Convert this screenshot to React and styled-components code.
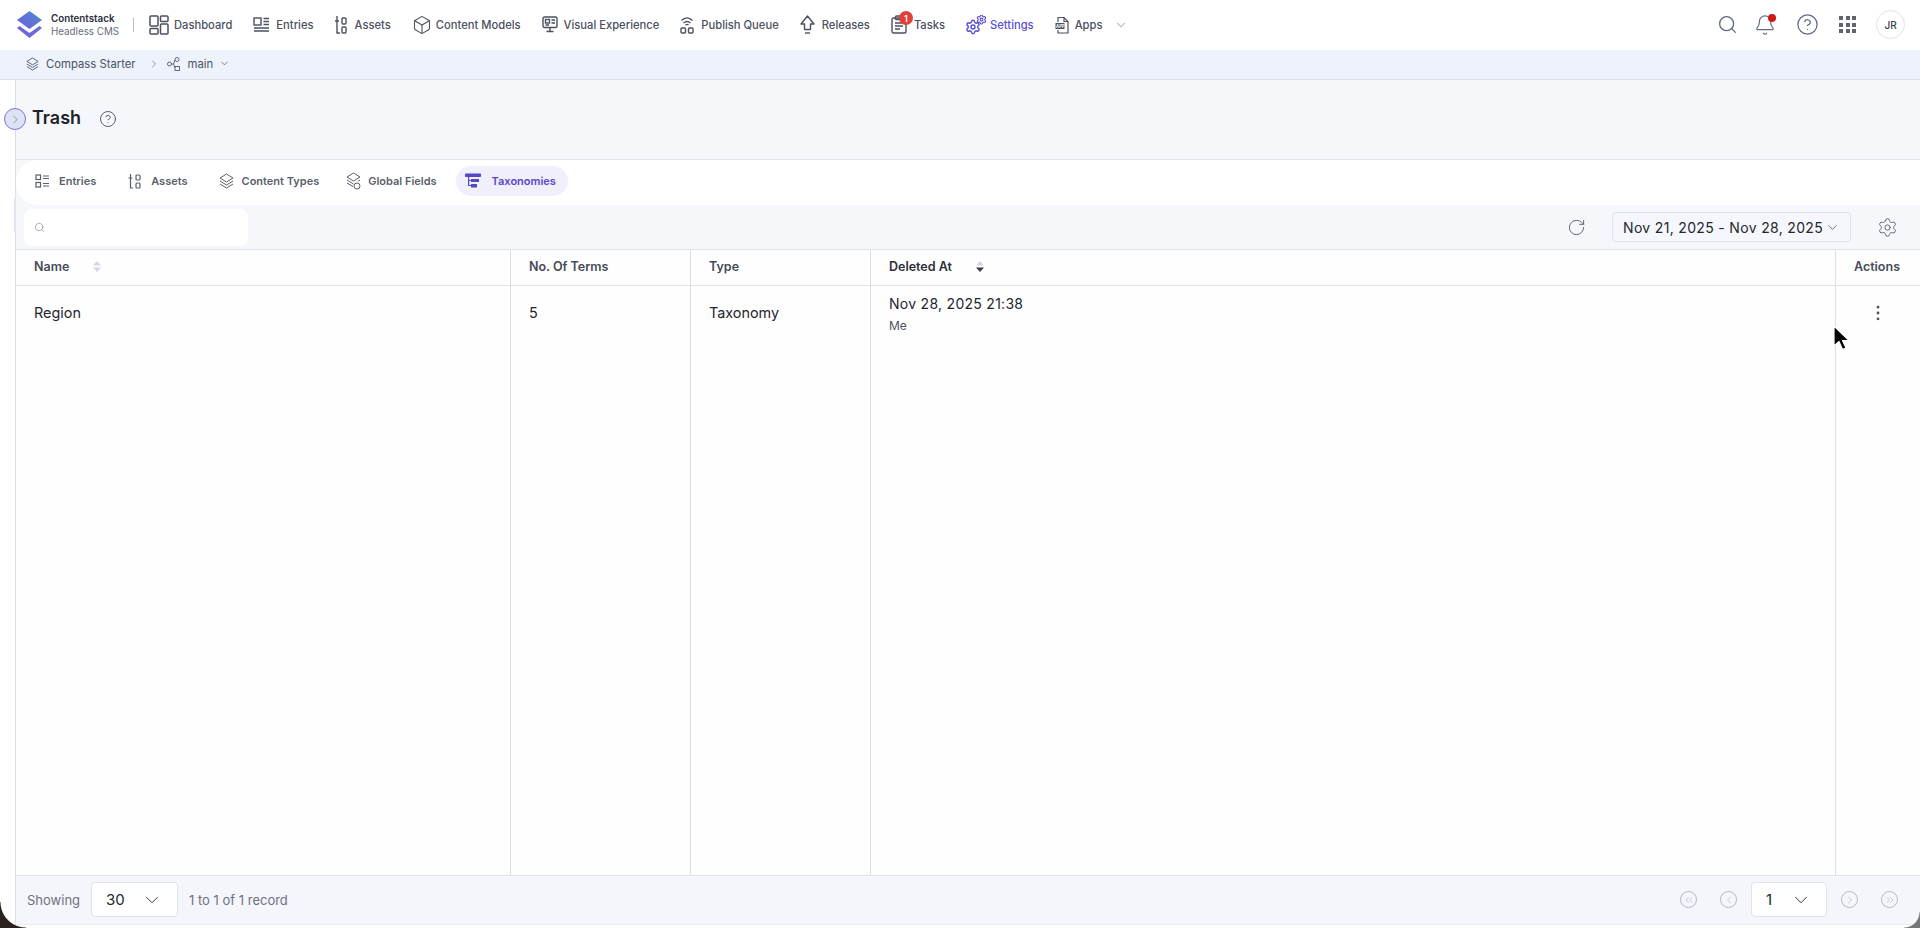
import React from "react";
import styled, { createGlobalStyle } from "styled-components";
import { ChevronDown, ChevronRight, ChevronLeft, ChevronsLeft, ChevronsRight, RotateCw, Settings, Box, Search, Bell, CircleHelp, MoreVertical } from "lucide-react";

const Global = createGlobalStyle`
  html, body { margin: 0; padding: 0; height: 100%; background: #fff; }
  #root { height: 100%; }
  * { box-sizing: border-box; }
  body { font-family: Inter, "Liberation Sans", sans-serif; color: #23262e; overflow: hidden; }
`;

const Page = styled.div`
  position: relative;
  height: 928px;
  width: 1920px;
  display: flex;
  flex-direction: column;
  overflow: hidden;
  background: #fff;
`;

const TopBar = styled.header`
  height: 50px;
  flex: none;
  display: flex;
  align-items: center;
  padding: 0 15px 1px 17px;
  background: #fff;
`;
const Brand = styled.div`
  display: flex;
  align-items: center;
  gap: 9px;
  width: 116px;
`;
const BrandText = styled.div`
  display: flex;
  flex-direction: column;
  gap: 2px;
  white-space: nowrap;
  line-height: 11px;
`;
const BrandName = styled.span`
  font-size: 9.8px;
  font-weight: 600;
  color: #2b2f3a;
`;
const BrandSub = styled.span`
  font-size: 9.8px;
  color: #666d7c;
`;
const Divider = styled.span`
  width: 1px;
  height: 14px;
  background: #b9bdc7;
  margin-right: 15px;
`;
const Nav = styled.nav`
  display: flex;
  align-items: center;
  gap: 21px;
`;
const NavItem = styled.a`
  position: relative;
  display: flex;
  align-items: center;
  gap: ${(p) => p.$gap}px;
  font-size: 11.2px;
  font-weight: 500;
  white-space: nowrap;
  color: ${(p) => (p.$active ? "#5c50d6" : "#4a5160")};
`;
const Badge = styled.span`
  position: absolute;
  left: 8px;
  top: -4px;
  width: 14px;
  height: 14px;
  border-radius: 50%;
  background: #e2403a;
  color: #fff;
  font-size: 9px;
  font-weight: 600;
  display: flex;
  align-items: center;
  justify-content: center;
`;
const Tools = styled.div`
  margin-left: auto;
  display: flex;
  align-items: center;
  gap: 20px;
  color: #5d6b85;
`;
const ToolIcon = styled.span`
  position: relative;
  display: flex;
  margin-right: ${(p) => p.$mr || 0}px;
`;
const Dot = styled.span`
  position: absolute;
  right: 0;
  top: 0;
  width: 8px;
  height: 8px;
  border-radius: 50%;
  background: #cf1b12;
`;
const Dots = styled.span`
  display: grid;
  grid-template-columns: repeat(3, 4px);
  gap: 2.5px;
`;
const Square = styled.i`
  display: block;
  width: 4px;
  height: 4px;
  background: #5f6470;
`;
const Avatar = styled.span`
  width: 29px;
  height: 29px;
  border-radius: 50%;
  border: 1px solid #dfe2ec;
  display: flex;
  align-items: center;
  justify-content: center;
  font-size: 10px;
  font-weight: 500;
  color: #3c404b;
`;

const CrumbBar = styled.div`
  height: 30px;
  flex: none;
  display: flex;
  align-items: center;
  padding: 0 0 2px 26px;
  background: #edf2fb;
  border-bottom: 1px solid #dcdfea;
  font-size: 11.3px;
  font-weight: 400;
  color: #4b5262;
`;
const CrumbText = styled.span`
  margin-left: ${(p) => p.$ml}px;
  white-space: nowrap;
`;
const CrumbIcon = styled.span`
  margin-left: ${(p) => p.$ml}px;
  display: flex;
  color: #555b6b;
`;

const Body = styled.div`
  flex: 1;
  display: flex;
  min-height: 0;
`;
const Rail = styled.aside`
  width: 15px;
  flex: none;
  background: #fff;
`;
const Main = styled.main`
  flex: 1;
  min-width: 0;
  display: flex;
  flex-direction: column;
  border-left: 1px solid #dcdfe9;
  background: #fff;
`;
const PageHead = styled.div`
  height: 80px;
  flex: none;
  display: flex;
  align-items: flex-start;
  padding: 27px 0 0 16px;
  gap: 18px;
  background: #f6f7fb;
  border-bottom: 1px solid #e1e4ee;
`;
const Title = styled.h1`
  margin: 0;
  font-size: 18px;
  line-height: 22px;
  font-weight: 600;
  color: #1f222a;
`;
const HelpWrap = styled.span`
  display: flex;
  color: #4b505c;
  margin-top: 3px;
`;
const TabStrip = styled.div`
  height: 45px;
  flex: none;
  background: #f6f7fb;
`;
const Tabs = styled.div`
  height: 100%;
  display: flex;
  align-items: center;
  padding: 0 0 3px 19px;
  background: #fff;
  border-radius: 22px 0 0 22px;
`;
const Tab = styled.a`
  display: flex;
  align-items: center;
  gap: ${(p) => p.$gap}px;
  height: 30px;
  margin-right: ${(p) => p.$mr}px;
  padding: 0 ${(p) => (p.$active ? "12px" : "0")} 0 ${(p) => (p.$active ? "9px" : "0")};
  border-radius: 15px;
  font-size: 11px;
  font-weight: 600;
  white-space: nowrap;
  color: ${(p) => (p.$active ? "#5548c8" : "#5b5f6b")};
  background: ${(p) => (p.$active ? "#f0effb" : "transparent")};
`;
const Toolbar = styled.div`
  height: 44px;
  flex: none;
  display: flex;
  align-items: center;
  padding: 0 22px 0 8px;
  background: #f6f7fb;
`;
const SearchBox = styled.div`
  width: 224px;
  height: 37px;
  margin-top: 1px;
  padding-left: 10px;
  display: flex;
  align-items: center;
  background: #fff;
  border-radius: 8px;
  color: #8b93a3;
`;
const ToolbarRight = styled.div`
  margin-left: auto;
  display: flex;
  align-items: center;
  color: #5a5f6b;
`;
const DatePicker = styled.div`
  width: 239px;
  height: 30px;
  margin: 0 26px 0 26px;
  padding-left: 10px;
  display: flex;
  align-items: center;
  gap: 2px;
  border: 1px solid #dde3f0;
  border-radius: 4px;
  background: #f6f7fc;
  font-size: 14px;
  letter-spacing: 0.33px;
  white-space: nowrap;
  color: #23262e;
`;
const Table = styled.div`
  flex: 1;
  min-height: 0;
  display: grid;
  grid-template-columns: 495px 180px 180px 965px 1fr;
  grid-template-rows: 36px 1fr;
  border-top: 1px solid #dfe2ec;
  background: #fefefe;
`;
const HeadCell = styled.div`
  display: flex;
  align-items: center;
  gap: ${(p) => p.$gap || 0}px;
  padding-left: 18px;
  padding-bottom: 3px;
  font-size: 12.5px;
  font-weight: 600;
  color: ${(p) => (p.$dark ? "#2c2f38" : "#464b57")};
  border-right: ${(p) => (p.$last ? "none" : "1px solid #d9dceb")};
  border-bottom: 1px solid #dfe2ec;
`;
const ActionsHead = styled(HeadCell)`
  padding-left: 18px;
`;
const Cell = styled.div`
  padding: 10px 18px 0;
  font-size: 14.4px;
  line-height: 34px;
  color: #23262e;
  border-right: ${(p) => (p.$last ? "none" : "1px solid #d9dceb")};
`;
const DateCell = styled(Cell)`
  padding-top: 8px;
`;
const DateLine = styled.div`
  font-size: 14px;
  line-height: 20px;
  letter-spacing: 0.28px;
`;
const ByLine = styled.div`
  font-size: 12px;
  line-height: 16px;
  margin-top: 4px;
  color: #4e5360;
`;
const ActionCell = styled(Cell)`
  padding: 17px 0 0 32px;
  color: #4a4d57;
  line-height: 0;
`;
const Footer = styled.footer`
  height: 50px;
  flex: none;
  margin-bottom: 3px;
  display: flex;
  align-items: center;
  padding: 0 0 1px 11px;
  background: #f5f5fc;
  border-top: 1px solid #dfe2ec;
  border-bottom: 1px solid #ebedf5;
  font-size: 13px;
  color: #6d7280;
`;
const Select = styled.div`
  width: ${(p) => p.$w}px;
  height: 35px;
  display: flex;
  align-items: center;
  justify-content: space-between;
  padding: 0 ${(p) => p.$pr}px 0 ${(p) => p.$pl}px;
  margin: ${(p) => p.$m};
  background: #fff;
  border: 1px solid #dde3f0;
  border-radius: 4px;
  font-size: 15px;
  color: #23262e;
`;
const Pager = styled.div`
  margin-left: auto;
  display: flex;
  align-items: center;
  padding-right: 22px;
`;
const PageDot = styled.span`
  width: 17px;
  height: 17px;
  margin: ${(p) => p.$m};
  border-radius: 50%;
  border: 1px solid #b5b7c0;
  display: flex;
  align-items: center;
  justify-content: center;
  color: #9a9da8;
`;

const CollapseBtn = styled.button`
  position: absolute;
  left: 4px;
  top: 108px;
  width: 22px;
  height: 22px;
  padding: 0;
  border-radius: 50%;
  border: 1px solid #7a76d8;
  background: #dfe2f5;
  color: #666a78;
  display: flex;
  align-items: center;
  justify-content: center;
`;
const Handle = styled.span`
  position: absolute;
  left: 14px;
  top: 198px;
  width: 2px;
  height: 34px;
  background: #dfe3f3;
`;
const Pointer = styled.svg`
  position: absolute;
  left: 1832px;
  top: 324px;
`;
const CornerLeft = styled.span`
  position: absolute;
  left: 0;
  bottom: 0;
  width: 26px;
  height: 26px;
  background: radial-gradient(circle at 100% 0, transparent 25px, #2a211e 26px);
`;
const CornerRight = styled.span`
  position: absolute;
  right: 0;
  bottom: 0;
  width: 16px;
  height: 16px;
  background: radial-gradient(circle at 0 0, transparent 15px, #77777a 16px);
`;

const S = ({ w, h, vb, children, sw = 1.4 }) => (
  <svg width={w} height={h} viewBox={vb || `0 0 ${w} ${h}`} fill="none" stroke="currentColor" strokeWidth={sw} style={{ flex: "none", display: "block" }}>
    {children}
  </svg>
);

const Logo = () => (
  <svg width="25" height="27" viewBox="0 0 25 27" style={{ flex: "none" }}>
    <defs>
      <linearGradient id="lg" x1="0" y1="1" x2="1" y2="0">
        <stop offset="0" stopColor="#6d5ce0" />
        <stop offset="1" stopColor="#4f8fc9" />
      </linearGradient>
    </defs>
    <polygon points="12.5,0 25,9 12.5,18 0,9" fill="url(#lg)" />
    <polygon points="0,17 2.5,15 12.5,22 22.5,15 25,17 12.5,27" fill="#6e68e0" />
  </svg>
);

const IcDash = () => (
  <S w={20} h={20} sw={1.5}>
    <rect x="1" y="1" width="8" height="10" rx="1" />
    <rect x="1" y="13.5" width="8" height="5.5" rx="1" />
    <rect x="11.5" y="1" width="7.5" height="5.5" rx="1" />
    <rect x="11.5" y="9" width="7.5" height="10" rx="1" />
  </S>
);
const IcEntries = () => (
  <S w={17} h={17}>
    <rect x="1" y="2" width="7" height="7" />
    <path d="M10.5 2.5H16M10.5 5.5H16M10.5 8.5H16M1 12H16M1 15H16" />
  </S>
);
const IcAssets = () => (
  <S w={12} h={20}>
    <path d="M2 1V18H5M0 6H4" />
    <rect x="7" y="3" width="4" height="6" rx="1" />
    <rect x="7" y="12" width="4" height="6" rx="1" />
  </S>
);
const IcVisual = () => (
  <S w={16} h={17}>
    <rect x="1" y="1" width="14" height="10.5" rx="1.5" />
    <rect x="3.5" y="3.5" width="4" height="3.5" />
    <path d="M9.5 4H13M9.5 7H13M3.5 9H7M8 11.5V15M4.5 15.5H11.5" />
  </S>
);
const IcPublish = () => (
  <S w={14} h={18}>
    <path d="M1.5 4.5C5 1 9 1 12.5 4.5M3.5 7C6 4.8 8 4.8 10.5 7M5.5 9C6.5 8.2 7.5 8.2 8.5 9" />
    <rect x="1" y="12" width="4.5" height="5" rx="1" />
    <rect x="8.5" y="12" width="4.5" height="5" rx="1" />
  </S>
);
const IcRelease = () => (
  <S w={15} h={19}>
    <path d="M7.5 1L14 9H10.5V14.5H4.5V9H1Z" strokeLinejoin="round" />
    <path d="M5 18H10" />
  </S>
);
const IcTasks = () => (
  <S w={16} h={19}>
    <rect x="1" y="3" width="14" height="15" rx="1.5" />
    <rect x="4.5" y="1" width="7" height="3.5" rx="1" />
    <path d="M4 8H12M4 11H12M4 14H9" />
  </S>
);
const IcSettings = () => (
  <svg width="20" height="20" viewBox="0 0 20 20" fill="none" style={{ flex: "none" }}>
    <Settings x="-1" y="4" width="16" height="16" strokeWidth={2.2} color="#5c50d6" />
    <Settings x="10" y="-1" width="11" height="11" strokeWidth={2.4} color="#5c50d6" />
  </svg>
);
const IcApps = () => (
  <S w={14} h={18} sw={1.2}>
    <path d="M3 6V1.5H9L13 5.5V17H3V14" />
    <path d="M9 1.5V5.5H13" />
    <rect x="0.5" y="7" width="9" height="6" fill="#4a5160" stroke="none" />
    <text x="1" y="11.7" fontSize="4.2" fontWeight="700" fill="#fff" stroke="none" fontFamily="Inter, sans-serif">APP</text>
  </S>
);
const IcStack = ({ s = 15 }) => (
  <S w={s} h={s + 1} vb="0 0 15 16" sw={1}>
    <path d="M7.5 1L14 5L7.5 9L1 5Z" />
    <path d="M1 8L7.5 12L14 8M1 11L7.5 15L14 11" />
  </S>
);
const IcBranch = () => (
  <S w={14} h={14} sw={0.9}>
    <circle cx="2.5" cy="7" r="2" />
    <rect x="8" y="0.5" width="4" height="4" rx="2" />
    <rect x="8" y="9.5" width="4.5" height="4" />
    <path d="M4.5 7H6.5L8 3M6.5 7L8 11" />
  </S>
);
const IcTabEntries = () => (
  <S w={15} h={14} sw={1.2}>
    <rect x="1" y="1" width="4.5" height="4.5" />
    <rect x="1" y="8.5" width="4.5" height="4.5" />
    <path d="M8 2H14M8 4.5H14M8 9.5H14M8 12H14" />
  </S>
);
const IcTabAssets = () => (
  <S w={13} h={16} sw={1.2}>
    <path d="M2.5 1V15H5M0.5 5H4.5" />
    <rect x="8" y="2" width="4" height="5" rx="1" />
    <rect x="8" y="10" width="4" height="5" rx="1" />
  </S>
);
const IcGlobal = () => (
  <S w={15} h={18} vb="0 0 15 18" sw={1}>
    <path d="M7.5 1L14 5L7.5 9L1 5Z" />
    <path d="M1 8L7.5 12M14 8L12 9.2M1 11L7 14.5" />
    <circle cx="11" cy="14" r="3" />
  </S>
);
const IcTaxonomy = () => (
  <svg width="16" height="16" viewBox="0 0 16 16" fill="#5548c8" style={{ flex: "none" }}>
    <rect x="0" y="0.5" width="16" height="3.5" rx="0.7" />
    <rect x="3" y="4" width="1.2" height="9" />
    <rect x="6" y="6" width="8" height="3" />
    <rect x="6" y="11" width="6" height="3.5" />
    <rect x="3" y="7" width="3" height="1" />
    <rect x="3" y="12" width="3" height="1" />
  </svg>
);
const Sort = ({ active }) => (
  <svg width="8" height="11" viewBox="0 0 8 11" style={{ flex: "none" }}>
    <polygon points="4,0 8,4.5 0,4.5" fill="#d4d7e3" />
    <polygon points="0,6.5 8,6.5 4,11" fill={active ? "#3a3d46" : "#d4d7e3"} />
  </svg>
);

const navItems = [
  { label: "Dashboard", icon: <IcDash />, gap: 5 },
  { label: "Entries", icon: <IcEntries />, gap: 6 },
  { label: "Assets", icon: <IcAssets />, gap: 8 },
  { label: "Content Models", icon: <Box size={20} strokeWidth={1.3} />, gap: 4 },
  { label: "Visual Experience", icon: <IcVisual />, gap: 6 },
  { label: "Publish Queue", icon: <IcPublish />, gap: 7 },
  { label: "Releases", icon: <IcRelease />, gap: 7 },
  { label: "Tasks", icon: <IcTasks />, gap: 7, badge: "1" },
  { label: "Settings", icon: <IcSettings />, gap: 4, active: true },
  { label: "Apps", icon: <IcApps />, gap: 6, chevron: true },
];

const tabs = [
  { label: "Entries", icon: <IcTabEntries />, gap: 9, mr: 32 },
  { label: "Assets", icon: <IcTabAssets />, gap: 10, mr: 31 },
  { label: "Content Types", icon: <IcStack s={15} />, gap: 8, mr: 27 },
  { label: "Global Fields", icon: <IcGlobal />, gap: 7, mr: 19 },
  { label: "Taxonomies", icon: <IcTaxonomy />, gap: 11, mr: 0, active: true },
];

export default function App() {
  return (
    <Page>
      <Global />
      <TopBar>
        <Brand>
          <Logo />
          <BrandText>
            <BrandName>Contentstack</BrandName>
            <BrandSub>Headless CMS</BrandSub>
          </BrandText>
        </Brand>
        <Divider />
        <Nav>
          {navItems.map((n) => (
            <NavItem key={n.label} $gap={n.gap} $active={n.active}>
              {n.icon}
              {n.badge && <Badge>{n.badge}</Badge>}
              {n.label}
              {n.chevron && <ChevronDown size={14} strokeWidth={1} style={{ marginLeft: 6 }} />}
            </NavItem>
          ))}
        </Nav>
        <Tools>
          <ToolIcon $mr={-4}><Search size={21} strokeWidth={1.5} /></ToolIcon>
          <ToolIcon><Bell size={22} strokeWidth={1.3} /><Dot /></ToolIcon>
          <ToolIcon><CircleHelp size={23} strokeWidth={1.3} /></ToolIcon>
          <Dots>{Array.from({ length: 9 }).map((_, i) => <Square key={i} />)}</Dots>
          <Avatar>JR</Avatar>
        </Tools>
      </TopBar>
      <CrumbBar>
        <IcStack s={13} />
        <CrumbText $ml={7}>Compass Starter</CrumbText>
        <CrumbIcon $ml={12}><ChevronRight size={12} strokeWidth={1.2} /></CrumbIcon>
        <CrumbIcon $ml={7}><IcBranch /></CrumbIcon>
        <CrumbText $ml={7}>main</CrumbText>
        <CrumbIcon $ml={6}><ChevronDown size={11} strokeWidth={1.6} /></CrumbIcon>
      </CrumbBar>
      <Body>
        <Rail />
        <Main>
          <PageHead>
            <Title>Trash</Title>
            <HelpWrap><CircleHelp size={18} strokeWidth={1.2} /></HelpWrap>
          </PageHead>
          <TabStrip>
            <Tabs>
              {tabs.map((t) => (
                <Tab key={t.label} $gap={t.gap} $mr={t.mr} $active={t.active}>
                  {t.icon}
                  {t.label}
                </Tab>
              ))}
            </Tabs>
          </TabStrip>
          <Toolbar>
            <SearchBox><Search size={11} strokeWidth={1.6} /></SearchBox>
            <ToolbarRight>
              <RotateCw size={19} strokeWidth={1.2} />
              <DatePicker>
                Nov 21, 2025 - Nov 28, 2025
                <ChevronDown size={15} strokeWidth={1} />
              </DatePicker>
              <Settings size={21} strokeWidth={1.1} />
            </ToolbarRight>
          </Toolbar>
          <Table>
            <HeadCell $gap={24}>Name <Sort /></HeadCell>
            <HeadCell>No. Of Terms</HeadCell>
            <HeadCell>Type</HeadCell>
            <HeadCell $gap={24} $dark>Deleted At <Sort active /></HeadCell>
            <ActionsHead $last>Actions</ActionsHead>
            <Cell>Region</Cell>
            <Cell>5</Cell>
            <Cell>Taxonomy</Cell>
            <DateCell>
              <DateLine>Nov 28, 2025 21:38</DateLine>
              <ByLine>Me</ByLine>
            </DateCell>
            <ActionCell $last><MoreVertical size={20} strokeWidth={1.4} /></ActionCell>
          </Table>
          <Footer>
            Showing
            <Select $w={87} $pl={14} $pr={14} $m="0 11px 0 11px">
              30
              <ChevronDown size={22} strokeWidth={1} />
            </Select>
            1 to 1 of 1 record
            <Pager>
              <PageDot $m="0 23px 0 0"><ChevronsLeft size={12} strokeWidth={1} /></PageDot>
              <PageDot $m="0 14px 0 0"><ChevronLeft size={12} strokeWidth={1} /></PageDot>
              <Select $w={76} $pl={14} $pr={14} $m="0 14px 0 0">
                1
                <ChevronDown size={22} strokeWidth={1} />
              </Select>
              <PageDot $m="0 23px 0 0"><ChevronRight size={12} strokeWidth={1} /></PageDot>
              <PageDot $m="0"><ChevronsRight size={12} strokeWidth={1} /></PageDot>
            </Pager>
          </Footer>
        </Main>
      </Body>
      <CollapseBtn><ChevronRight size={13} strokeWidth={1.2} /></CollapseBtn>
      <Handle />
      <Pointer width="20" height="30" viewBox="0 0 20 30">
        <path d="M2 2V22L7 17.5L10.5 25.5L14 24L10.5 16.5H17Z" fill="#000" stroke="#fff" strokeWidth="1.2" strokeLinejoin="round" />
      </Pointer>
      <CornerLeft />
      <CornerRight />
    </Page>
  );
}
